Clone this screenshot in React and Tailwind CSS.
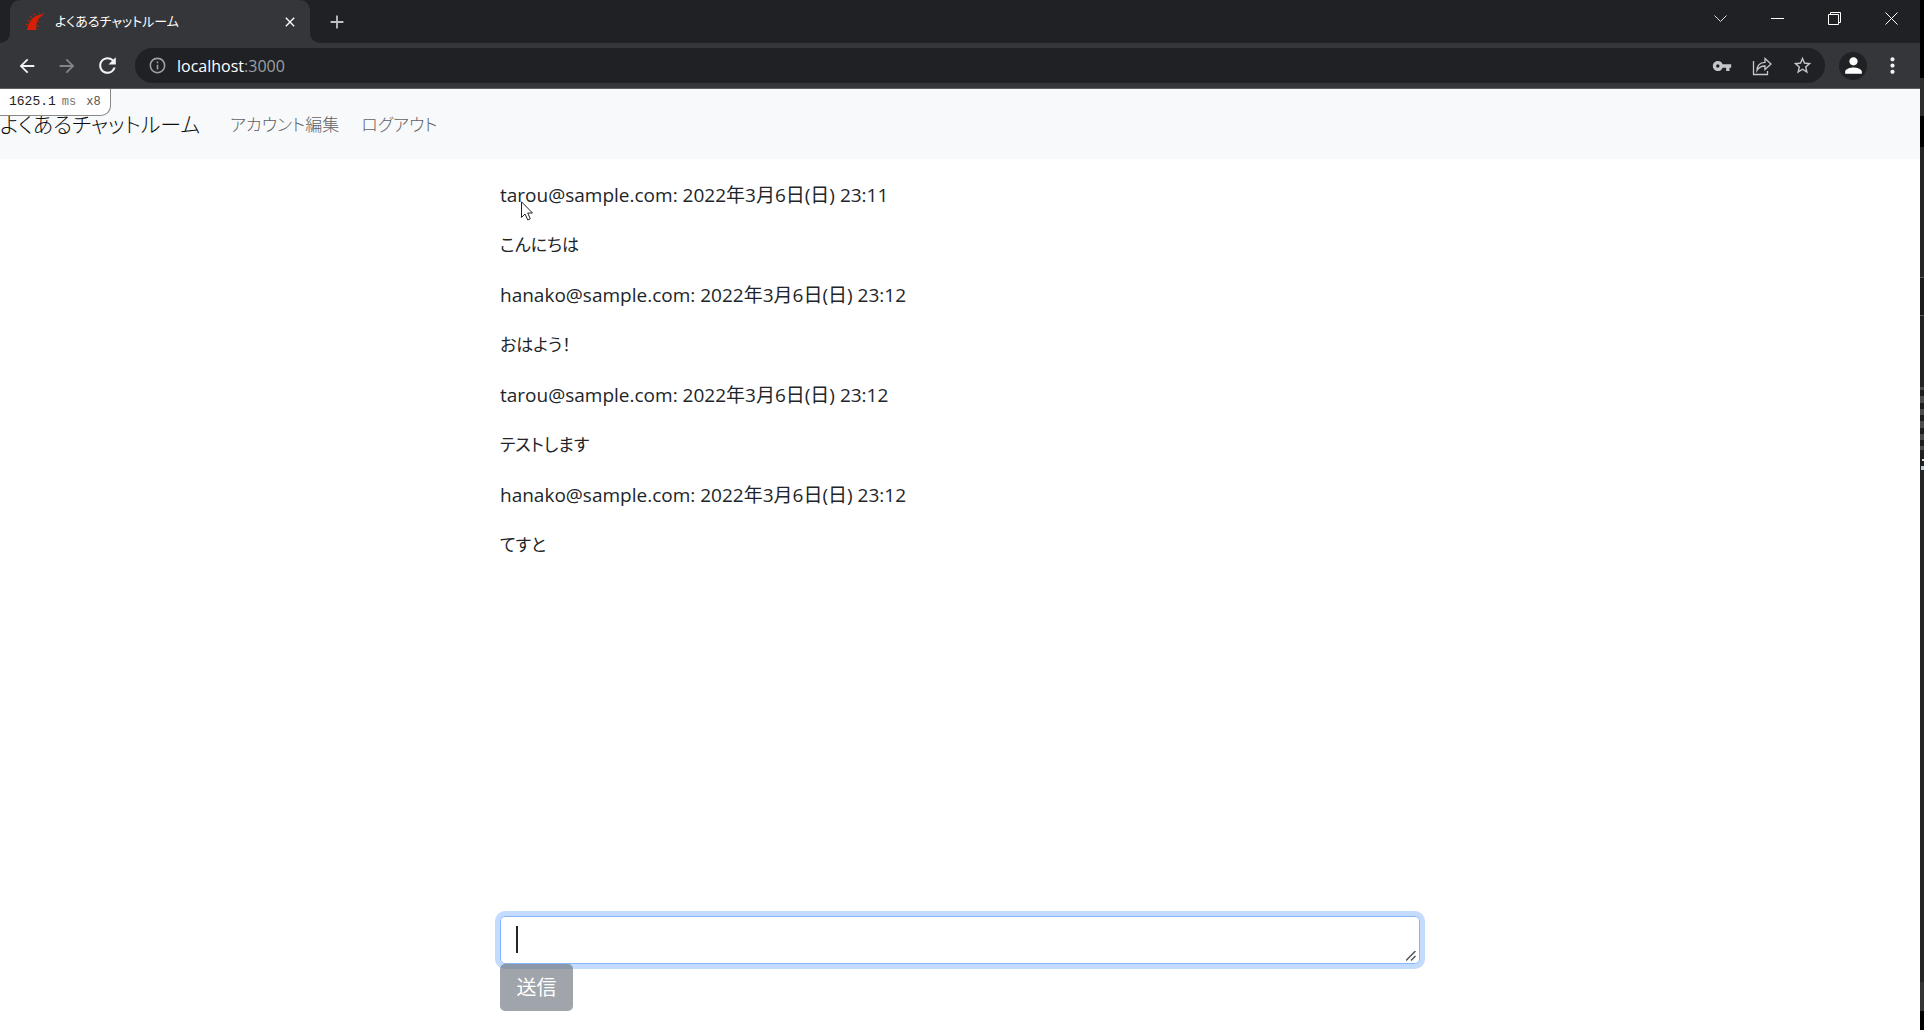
import React, { useState } from "react";
import { MdArrowBack, MdArrowForward, MdRefresh, MdInfoOutline, MdVpnKey, MdStarBorder, MdPerson, MdMoreVert, MdClose, MdAdd } from "react-icons/md";

const messages = [
  { id: 1, user: "tarou@sample.com", date: "2022年3月6日(日) 23:11", body: "こんにちは" },
  { id: 2, user: "hanako@sample.com", date: "2022年3月6日(日) 23:12", body: "おはよう！" },
  { id: 3, user: "tarou@sample.com", date: "2022年3月6日(日) 23:12", body: "テストします" },
  { id: 4, user: "hanako@sample.com", date: "2022年3月6日(日) 23:12", body: "てすと" },
];

// Slice of the window behind the browser, top to bottom
const edgeStrips = [
  "h-[78px] bg-black",
  "h-[38px] bg-[#2d2d2d]",
  "h-[31px] bg-black",
  "h-[130px] bg-[#242625]",
  "h-px bg-[#5a5a5a]",
  "h-[37px] bg-[#191b1a]",
  "h-px bg-[#5a5a5a]",
  "h-[71px] bg-[#222423]",
  "h-[3px] bg-[#4b4b4b]",
  "h-[6px] bg-[#1e1e1e]",
  "h-[7px] bg-[#4b4b4b]",
  "h-[6px] bg-[#1e1e1e]",
  "h-[6px] bg-[#4b4b4b]",
  "h-[6px] bg-[#1e1e1e]",
  "h-[7px] bg-[#4b4b4b]",
  "h-[6px] bg-[#1e1e1e]",
  "h-[6px] bg-[#4b4b4b]",
  "h-[6px] bg-[#1e1e1e]",
  "h-[4px] bg-[#4b4b4b]",
  "h-[9px] bg-[#1e1e1e]",
  "ml-[2px] h-[2px] bg-[#d6dde4]",
  "h-[5px] bg-[#1e1e1e]",
  "ml-[1px] h-[4px] bg-[#b9c6d4]",
  "grow bg-[#242625]",
  "h-[29px] bg-[#333534]",
  "h-[19px] bg-black",
];

function RailsLogo() {
  return (
    <svg width="20" height="20" viewBox="0 0 20 20" fill="#d81e05" aria-hidden>
      <path d="M2 18C3.500 9.500 8 2.500 18 2.200v1C13.500 5.500 10.500 10 11.500 18z" />
      <circle cx="1.700" cy="12.500" r="0.800" />
      <circle cx="3.300" cy="8.500" r="0.800" />
      <circle cx="6" cy="5" r="0.800" />
      <circle cx="9.500" cy="2.200" r="0.800" />
      <circle cx="14.500" cy="0.900" r="0.700" />
      <circle cx="18.500" cy="1.200" r="0.700" />
      <circle cx="13" cy="9" r="0.800" />
      <circle cx="13" cy="14" r="0.800" />
    </svg>
  );
}

function TabBar() {
  return (
    <div className="flex h-[43px] items-end bg-[#202124] text-white">
      <div className="h-[10px] w-[10px] bg-[#35363a]">
        <div className="h-full w-full rounded-br-[10px] bg-[#202124]" />
      </div>
      <div className="flex h-[43px] w-[300px] items-center rounded-t-[10px] bg-[#35363a] pr-[12px] pl-[15px]">
        <RailsLogo />
        <span className="ml-[10px] grow text-[13px]">よくあるチャットルーム</span>
        <button aria-label="閉じる">
          <MdClose size={16} />
        </button>
      </div>
      <div className="h-[10px] w-[10px] bg-[#35363a]">
        <div className="h-full w-full rounded-bl-[10px] bg-[#202124]" />
      </div>
      <button aria-label="新しいタブ" className="ml-[6px] self-center text-[#c0c1c4]">
        <MdAdd size={22} />
      </button>
      <div className="ml-auto flex h-[37px] items-center self-start pr-[22px]">
        <button aria-label="タブを検索" className="mr-[44px]">
          <svg width="13" height="8" viewBox="0 0 13 8" fill="none" stroke="#ddd"><path d="M0.500 0.500L6.500 6.500L12.500 0.500" /></svg>
        </button>
        <button aria-label="最小化" className="mr-[44px]">
          <svg width="13" height="13" viewBox="0 0 13 13" stroke="#fff"><path d="M0 6.500H13" /></svg>
        </button>
        <button aria-label="元に戻す" className="mr-[44px]">
          <svg width="13" height="13" viewBox="0 0 13 13" fill="none" stroke="#fff"><path d="M0.500 2.500H10.500V12.500H0.500zM2.500 2V0.500H12.500V10.500H11" /></svg>
        </button>
        <button aria-label="ウィンドウを閉じる">
          <svg width="13" height="13" viewBox="0 0 13 13" stroke="#fff"><path d="M0.500 0.500L12.500 12.500M12.500 0.500L0.500 12.500" /></svg>
        </button>
      </div>
    </div>
  );
}

function Toolbar() {
  return (
    <div className="flex h-[46px] items-center border-b border-[#5f6063] bg-[#35363a] pr-[15px] pl-[16px] text-[#f1f3f4]">
      <button aria-label="戻る" className="mr-[18px]"><MdArrowBack size={22} /></button>
      <button aria-label="進む" className="mr-[17px] text-[#848589]"><MdArrowForward size={22} /></button>
      <button aria-label="更新" className="mr-[15px]"><MdRefresh size={25} /></button>
      <div className="flex h-[35px] grow items-center rounded-full bg-[#202124] pr-[12px] pl-[13px] text-[#c4c6c9]">
        <MdInfoOutline size={19} className="text-[#9aa0a6]" />
        <p className="ml-[10px] grow text-[16px] leading-none text-[#9aa0a6]">
          <span className="text-white">localhost</span>:3000
        </p>
        <button aria-label="パスワード" className="mr-[20px]"><MdVpnKey size={20} /></button>
        <button aria-label="共有" className="mr-[20px]">
          <svg width="20" height="20" viewBox="0 0 20 20" fill="none" stroke="currentColor" strokeWidth="1.300">
            <path d="M1.500 5V18.500H15.500V15" />
            <path d="M5 14.500C5 9 8 6.500 13 6.300V2.500L19 8L13 13.500V10C9.500 10 7 11 5 14.500z" />
          </svg>
        </button>
        <button aria-label="ブックマーク"><MdStarBorder size={21} /></button>
      </div>
      <button aria-label="プロフィール" className="ml-[14px] flex h-[28px] w-[28px] items-center justify-center rounded-full bg-[#202124] text-white">
        <MdPerson size={25} />
      </button>
      <button aria-label="メニュー" className="ml-[13px]"><MdMoreVert size={25} /></button>
    </div>
  );
}

function Navbar() {
  return (
    <nav className="relative flex h-[70px] items-center bg-[#f8f9fa] pt-[2px]">
      <a href="#" className="mr-[30px] text-[21px] font-light text-[#0a0c0e]">よくあるチャットルーム</a>
      <a href="#" className="mr-[22px] text-[17px] font-light text-[#606264]">アカウント編集</a>
      <a href="#" className="text-[17px] font-light text-[#606264]">ログアウト</a>
      {/* Profiler badge */}
      <div className="absolute top-0 left-0 flex h-[27px] w-[111px] items-center rounded-br-[10px] border-r border-b border-[#888] bg-white pl-[9px] font-['Liberation_Mono',monospace] text-[13px] text-[#222]">
        1625.1<span className="ml-[6px] text-[12px] text-[#777]">ms</span>
        <span className="ml-[10px] text-[12px] text-[#555]">x8</span>
      </div>
    </nav>
  );
}

function MessageForm() {
  const [content, setContent] = useState("");

  return (
    <form className="flex flex-col items-start" onSubmit={(e) => e.preventDefault()}>
      <div className="relative flex w-full">
        <textarea
          aria-label="メッセージ"
          rows={1}
          value={content}
          onChange={(e) => setContent(e.target.value)}
          className="h-[48px] w-full resize-none rounded-[5px] border border-[#86b7fe] px-[16px] py-[8px] text-[20px] caret-transparent ring-[5px] ring-[#c2dbfe] outline-none"
        />
        <span className="absolute top-[10px] left-[16px] h-[27px] w-[2px] bg-[#212529]" />
        <svg className="absolute right-[4px] bottom-[3px]" width="10" height="10" viewBox="0 0 10 10" stroke="#555" strokeWidth="1.500" aria-hidden>
          <path d="M0 9.500L9.500 0M5 9.500L9.500 5" />
        </svg>
      </div>
      <button type="submit" disabled className="relative h-[47px] w-[73px] rounded-[5px] bg-[#6c757d]/65 text-[20px] text-white">
        送信
      </button>
    </form>
  );
}

export default function App() {
  return (
    <div className="flex min-h-screen bg-white font-['Open_Sans','Noto_Sans_CJK_JP',sans-serif] text-[#212529] [font-feature-settings:'palt']">
      <div className="flex grow flex-col">
        <TabBar />
        <Toolbar />
        <Navbar />
        <main className="relative mx-auto flex w-full max-w-[920px] grow flex-col justify-between pt-[21px] pb-[19px]">
          <div>
            {messages.map((m) => (
              <div key={m.id} className="leading-[30px]">
                <p className="mb-[20px] text-[19px]">{m.user}: {m.date}</p>
                <p className="mb-[20px] text-[17px]">{m.body}</p>
              </div>
            ))}
          </div>
          <MessageForm />
          {/* Mouse pointer */}
          <svg className="absolute top-[42px] left-[21px]" width="13" height="20" viewBox="0 0 13 20" fill="#fff" stroke="#222" aria-hidden>
            <path d="M0.500 0.800V16.500L4 13L6.800 19L9.300 17.800L6.700 12H11.500z" />
          </svg>
        </main>
      </div>
      <div className="flex w-1 flex-col bg-[#1e1e1e]" aria-hidden>
        {edgeStrips.map((className, i) => (
          <div key={i} className={className} />
        ))}
      </div>
    </div>
  );
}
